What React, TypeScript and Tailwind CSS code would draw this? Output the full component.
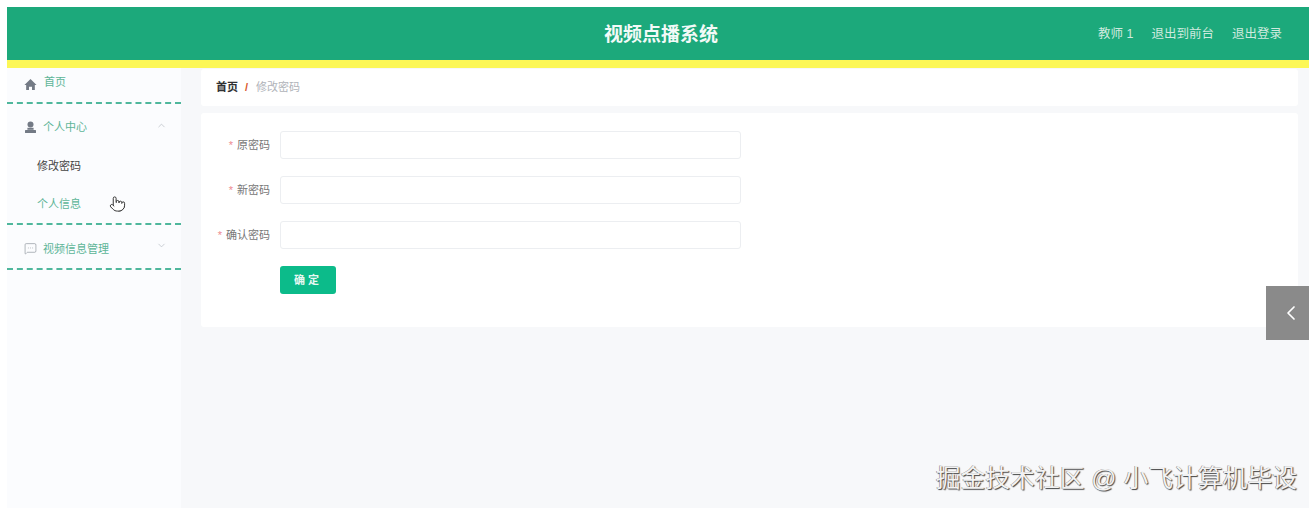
import { ChevronDown, ChevronLeft, ChevronUp, MessageSquareMore, Pointer } from "lucide-react"

const font = "font-['Liberation_Sans','Noto_Sans_CJK_SC',sans-serif]"

const fields = [
  { label: "原密码" },
  { label: "新密码" },
  { label: "确认密码" },
]

function HomeIcon() {
  return (
    <svg viewBox="0 0 12 12" className="w-[13px] h-[13px] mr-[7px] mt-[3px]" fill="#737a85">
      <path d="M6 1 L11.6 6.4 L10 6.4 L10 11 L7.4 11 L7.4 8 L4.6 8 L4.6 11 L2 11 L2 6.4 L0.4 6.4 Z" />
    </svg>
  )
}

function UserIcon() {
  return (
    <svg viewBox="0 0 13 13" className="w-[13px] h-[13px] mr-[6px]" fill="#737a85">
      <circle cx="6.5" cy="3.6" r="3" />
      <rect x="3.4" y="6.8" width="6.2" height="2" />
      <rect x="1" y="9" width="11" height="3" rx="0.5" />
    </svg>
  )
}

function Field({ label }: { label: string }) {
  return (
    <div className="flex items-center h-7">
      <label className="w-[69px] text-right text-[11px] text-[#777]">
        <span className="text-[#ee8a8f] mr-1">*</span>
        {label}
      </label>
      <input className="ml-[10px] w-[461px] h-7 bg-white border border-[#eceef1] rounded-[3px]" />
    </div>
  )
}

export default function App() {
  return (
    <div className={`relative h-[508px] overflow-hidden bg-white pt-[7px] pl-[7px] pr-[5px] ${font}`}>
      {/* Header */}
      <header className="relative flex items-center justify-center h-[61px] bg-[#1ca97b] border-b-[8px] border-[#fcf757]">
        <h1 className="text-[19px] font-bold text-white pl-[6px] pt-[3px] opacity-95">视频点播系统</h1>
        <div className="absolute right-[27px] top-0 h-[53px] pt-px flex items-center gap-[18px] text-[12.5px] text-[#cfe9df]">
          <span>教师 1</span>
          <span>退出到前台</span>
          <span>退出登录</span>
        </div>
      </header>

      <div className="flex h-[440px] bg-[#f7f8fa]">
        {/* Sidebar */}
        <aside className="w-[174px] shrink-0 bg-[#fbfcfe] text-[11px] text-[#5db598]">
          <div className="flex items-center h-[36px] pl-[17px] pb-[5px] border-b-2 border-dashed border-[#4fb79c]">
            <HomeIcon />
            首页
          </div>
          <div className="border-b-2 border-dashed border-[#4fb79c]">
            <div className="flex items-center h-[46px] pl-[17px] pr-[14px]">
              <UserIcon />
              个人中心
              <ChevronUp className="ml-auto mb-1 w-[11px] h-[11px] text-[#b5bac2]" strokeWidth={1.5} />
            </div>
            <div className="flex items-center h-[38px] pl-[30px] pb-[6px] text-[#444]">修改密码</div>
            <div className="flex items-center h-[35px] pl-[30px] pb-[2px]">个人信息</div>
          </div>
          <div className="flex items-center h-[45px] pl-[17px] pr-[14px] pt-[5px] border-b-2 border-dashed border-[#4fb79c]">
            <MessageSquareMore className="w-[13px] h-[13px] text-[#8a9099] mr-[6px] mb-[2px]" strokeWidth={1.2} />
            视频信息管理
            <ChevronDown className="ml-auto mb-[7px] w-[11px] h-[11px] text-[#b5bac2]" strokeWidth={1.5} />
          </div>
        </aside>

        {/* Main */}
        <main className="flex-1 pt-px pl-5 pr-[11px]">
          <div className="flex items-center h-[37px] pl-[15px] bg-white text-[11px] rounded-[3px]">
            <span className="font-bold text-[#303133]">首页</span>
            <span className="ml-[7px] mr-[7px] font-bold text-[#d9572b] w-[4px]">/</span>
            <span className="text-[#b0b3b9]">修改密码</span>
          </div>
          <form className="mt-[7px] h-[214px] pt-[18px] bg-white rounded-[3px] flex flex-col gap-[17px]">
            {fields.map((f) => (
              <Field key={f.label} label={f.label} />
            ))}
            <button
              type="button"
              className="ml-[79px] w-[56px] h-7 bg-[#0cbb8a] text-[#e8f8f2] text-[11px] font-bold tracking-[3px] rounded-[3px]"
            >
              确定
            </button>
          </form>
        </main>
      </div>

      {/* Hand cursor */}
      <Pointer className="absolute left-[109px] top-[195px] w-[17px] h-[18px] text-[#333]" fill="#fff" strokeWidth={1.4} />

      {/* Side toggle */}
      <div className="absolute left-[1266px] top-[286px] w-[43px] h-[54px] flex items-center justify-end pr-[6px] bg-[#8a8a8a]">
        <ChevronLeft className="w-6 h-6 text-white" strokeWidth={1.7} />
      </div>

      {/* Watermark */}
      <div className="absolute right-[17px] top-[465px] text-[24.8px] leading-[28px] whitespace-nowrap text-[#f2f2f2] [text-shadow:1px_1px_1px_#444,-0.5px_-0.5px_0.5px_#777]">
        掘金技术社区 @ 小飞计算机毕设
      </div>
    </div>
  )
}
